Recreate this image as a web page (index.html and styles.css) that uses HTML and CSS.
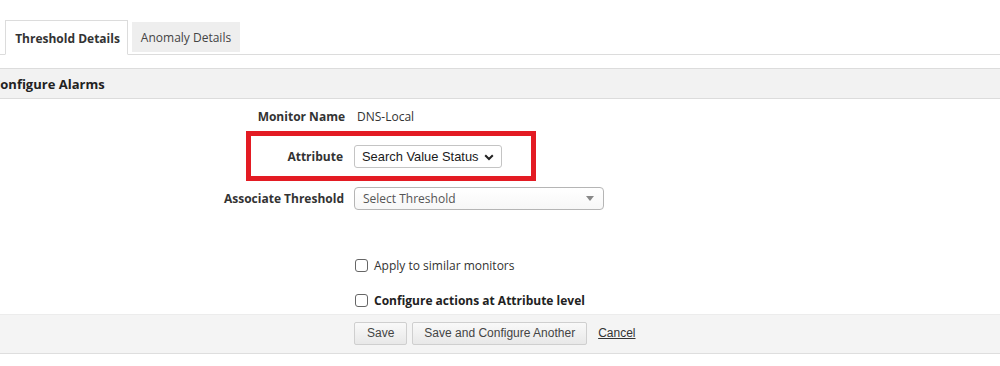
FILE: index.html
```html
<!DOCTYPE html>
<html>
<head>
<meta charset="utf-8">
<link rel="stylesheet" href="styles.css">
</head>
<body>
<div class="page">
  <div class="tabs">
    <div class="tab active">Threshold Details</div>
    <div class="tab">Anomaly Details</div>
  </div>
  <div class="section-head"><span class="section-title">Configure Alarms</span></div>
  <div class="form">
    <div class="row row-name">
      <div class="label">Monitor Name</div>
      <div class="value">DNS-Local</div>
    </div>
    <div class="row row-attr">
      <div class="label">Attribute</div>
      <div class="value">
        <div class="native-select">
          <span>Search Value Status</span>
          <svg class="chev" width="10" height="7" viewBox="0 0 10 7"><path d="M1.2 1.2 L5 5 L8.8 1.2" fill="none" stroke="#222" stroke-width="2"/></svg>
        </div>
      </div>
      <div class="highlight"></div>
    </div>
    <div class="row row-thr">
      <div class="label">Associate Threshold</div>
      <div class="value">
        <div class="combo">
          <span>Select Threshold</span>
          <svg class="tri" width="8" height="5" viewBox="0 0 8 5"><path d="M0 0 H8 L4 5 Z" fill="#888"/></svg>
        </div>
      </div>
    </div>
    <div class="row row-check1">
      <div class="label"></div>
      <label class="value check"><span class="box"></span><span>Apply to similar monitors</span></label>
    </div>
    <div class="row row-check2">
      <div class="label"></div>
      <label class="value check bold"><span class="box"></span><span>Configure actions at Attribute level</span></label>
    </div>
  </div>
  <div class="footer">
    <div class="label"></div>
    <div class="actions">
      <button class="btn">Save</button>
      <button class="btn">Save and Configure Another</button>
      <a class="cancel" href="#">Cancel</a>
    </div>
  </div>
</div>
</body>
</html>
```

FILE: styles.css
```css
* { box-sizing: border-box; }
html, body { margin: 0; padding: 0; background: #fff; }
body {
  font-family: "Open Sans", "Liberation Sans", sans-serif;
  font-size: 12px;
  color: #333;
  width: 1000px;
  height: 366px;
  overflow: hidden;
}
.tabs {
  display: flex;
  align-items: flex-end;
  padding: 20px 0 0 5px;
  border-bottom: 1px solid #dcdcdc;
  height: 55px;
}
.tab {
  width: 108px;
  height: 30px;
  margin-left: 4px;
  display: flex;
  align-items: center;
  justify-content: center;
  background: #eeeeee;
  color: #444;
  font-size: 12px;
  margin-bottom: 2px;
}
.tab.active {
  width: 123px;
  margin-left: 0;
  margin-bottom: -1px;
  height: 35px;
  background: #fff;
  border: 1px solid #dcdcdc;
  border-bottom: 1px solid #fff;
  font-weight: 700;
  color: #333;
  padding-top: 1px;
  padding-left: 2px;
}
.section-head {
  margin-top: 13px;
  height: 31px;
  background: #f2f2f2;
  border-top: 1px solid #dcdcdc;
  border-bottom: 1px solid #dcdcdc;
  display: flex;
  align-items: center;
}
.section-title {
  margin-left: -8px;
  font-weight: 700;
  font-size: 13px;
  color: #222;
}
.form { display: flex; flex-direction: column; }
.row {
  display: flex;
  align-items: center;
  position: relative;
}
.label {
  width: 345px;
  flex: none;
  text-align: right;
  font-weight: 700;
  color: #333;
  font-size: 12px;
}
.value { margin-left: 10px; display: flex; align-items: center; }
.row-name { height: 20px; margin-top: 7px; }
.row-name .value { margin-left: 12px; color: #333; }
.row-attr { height: 23px; margin-top: 19px; }
.row-attr .label { width: 343px; }
.row-attr .value { margin-left: 11px; }
.row-thr { height: 23px; margin-top: 19px; }
.row-thr .label { width: 344px; }
.row-check1 { height: 20px; margin-top: 45px; }
.row-check2 { height: 20px; margin-top: 15px; }
.native-select {
  width: 148px;
  height: 23px;
  border: 1px solid #c4c4c4;
  border-radius: 3px;
  background: #fff;
  display: flex;
  align-items: center;
  padding: 0 0 0 7px;
  font-family: "Liberation Sans", Arial, sans-serif;
  font-size: 12.9px;
  color: #1a1a1a;
  position: relative;
}
.chev { position: absolute; right: 7px; top: 8px; }
.combo {
  width: 250px;
  height: 23px;
  border: 1px solid #b5b5b5;
  border-radius: 4px;
  background: linear-gradient(#ffffff, #f7f7f7);
  display: flex;
  align-items: center;
  padding-left: 8px;
  color: #555;
  font-size: 12px;
  position: relative;
}
.tri { position: absolute; right: 9px; top: 8px; }
.highlight {
  position: absolute;
  left: 246px;
  top: -14px;
  width: 290px;
  height: 50px;
  border: 5px solid #e31b23;
  pointer-events: none;
}
.check { gap: 6px; color: #333; }
.check.bold { font-weight: 700; color: #222; }
.row-check2 .value { gap: 6px; font-size: 12px; }
.box {
  width: 13px;
  height: 13px;
  border: 1px solid #666;
  border-radius: 3px;
  background: #fff;
  flex: none;
}
.footer {
  margin-top: 4px;
  height: 40px;
  background: #f4f4f4;
  border-top: 1px solid #ececec;
  border-bottom: 1px solid #dedede;
  display: flex;
  align-items: center;
}
.footer .label { width: 344px; }
.actions { display: flex; align-items: center; margin-left: 10px; margin-top: -2px; }
.btn {
  height: 23px;
  padding: 0 12px;
  margin-right: 5px;
  border: 1px solid #cfcfcf;
  border-radius: 2px;
  background: linear-gradient(#f9f9f9, #e8e8e8);
  font-family: "Liberation Sans", Arial, sans-serif;
  font-size: 12px;
  color: #444;
}
.btn + .btn { margin-right: 11px; padding: 0 11px; }
.cancel {
  font-family: "Liberation Sans", Arial, sans-serif;
  font-size: 12px;
  color: #333;
  text-decoration: underline;
}
```
